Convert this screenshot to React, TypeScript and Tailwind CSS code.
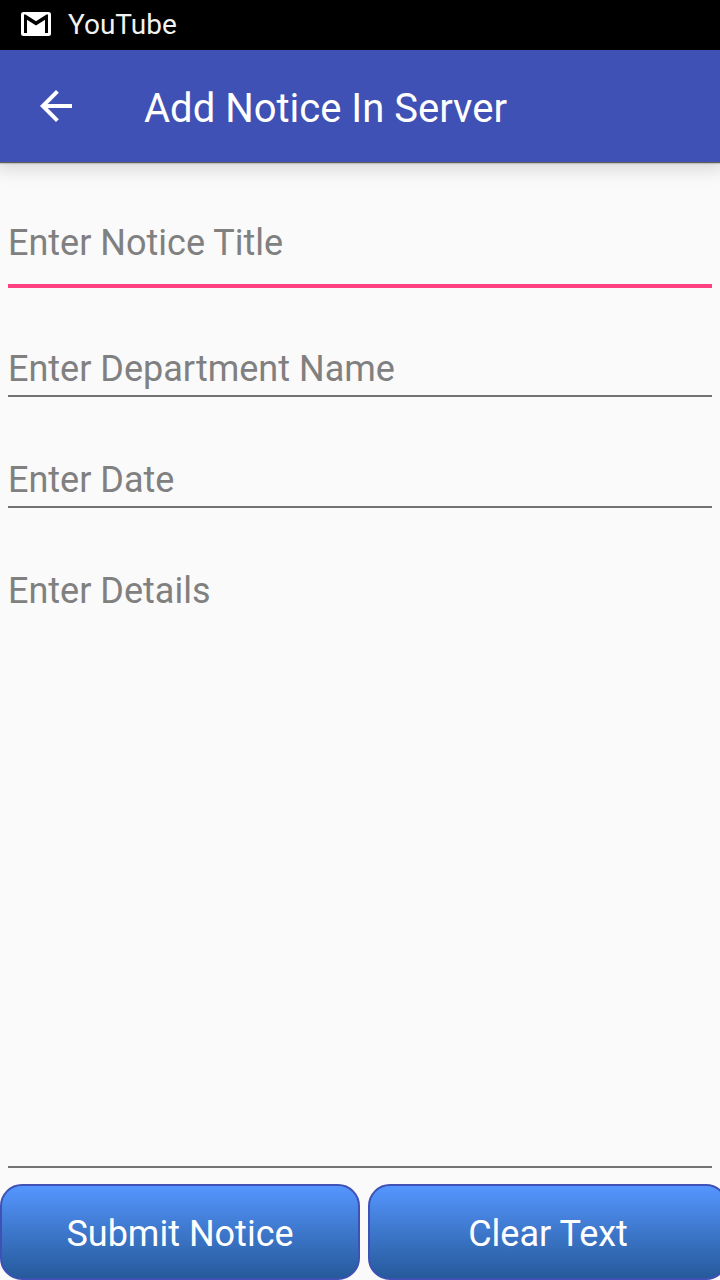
import React from 'react';

const field = 'block w-full rounded-none border-b-2 border-[#737373] bg-transparent p-0 pb-[5px] text-[36px] leading-[42px] text-[#212121] outline-none placeholder:text-[#808080] placeholder:opacity-100';
const titleField = 'block w-full rounded-none border-b-4 border-[#ff4081] bg-transparent p-0 pb-5 text-[36px] leading-[42px] text-[#212121] outline-none placeholder:text-[#808080] placeholder:opacity-100';
const action = 'h-24 shrink-0 basis-1/2 rounded-[22px] border-2 border-[#3f51b5] bg-linear-to-b from-[#5596ff] to-[#265a9b] pt-1 text-[36px] text-white';

export default function App() {
  return (
    <div className="flex min-h-screen flex-col overflow-x-hidden bg-[#fafafa] font-['Roboto',sans-serif]">
      <div className="flex h-[50px] items-center gap-4 bg-black px-5 text-[28px] text-[#f2f2f2]">
        <svg className="size-8" viewBox="0 0 32 32" aria-hidden="true">
          <rect x="1" y="3" width="30" height="24" rx="2.5" fill="#fff" />
          <path d="M4 24V5.5H5.5L16 12.3L26.5 5.5H28V24H25V10.8L16 16.5L7 10.8V24Z" fill="#000" />
        </svg>
        <span>YouTube</span>
      </div>
      <header className="relative z-10 flex h-28 items-center gap-16 bg-[#3f51b5] px-8 text-white shadow-[0_1px_0_rgba(0,0,0,0.5),0_2px_1px_rgba(0,0,0,0.15),0_4px_16px_4px_rgba(0,0,0,0.13)]">
        <button type="button" aria-label="Back" className="size-12">
          <svg viewBox="0 0 24 24" fill="currentColor"><path d="M20 11H7.83l5.59-5.59L12 4l-8 8 8 8 1.41-1.41L7.83 13H20v-2z" /></svg>
        </button>
        <h1 className="pt-1.5 text-[40px]">Add Notice In Server</h1>
      </header>
      <form className="flex grow flex-col">
        <div className="flex grow flex-col px-2 pt-15">
          <input aria-label="Notice title" placeholder="Enter Notice Title" className={titleField} />
          <div className="flex grow flex-col gap-[62px] pt-15">
            <input aria-label="Department name" placeholder="Enter Department Name" className={field} />
            <input aria-label="Date" placeholder="Enter Date" className={field} />
            <textarea aria-label="Details" placeholder="Enter Details" className={field + ' grow resize-none'} />
          </div>
        </div>
        <div className="mt-4 flex gap-2 overflow-hidden">
          <button type="submit" className={action}>Submit Notice</button>
          <button type="reset" className={action}>Clear Text</button>
        </div>
      </form>
    </div>
  );
}
